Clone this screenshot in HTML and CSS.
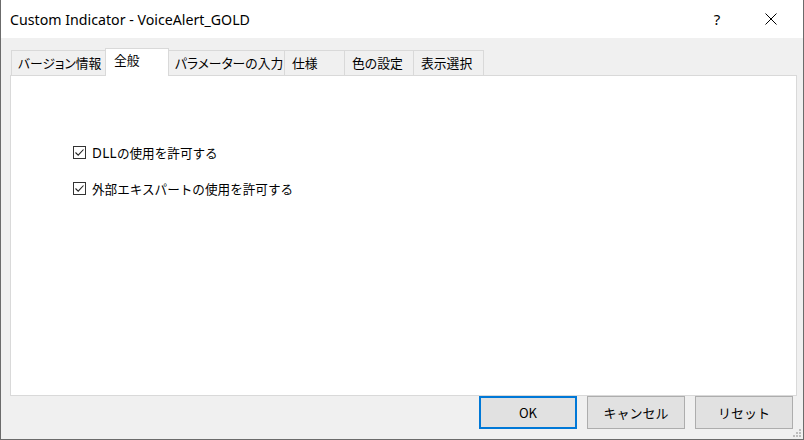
FILE: index.html
```html
<!DOCTYPE html>
<html lang="ja">
  <head>
    <title>Custom Indicator - VoiceAlert_GOLD</title>
    <meta charset="utf-8" />
    <link rel="stylesheet" href="styles.css">
  </head>
  <body>
    <div class="window">
      <div class="titleBar">
        <span class="title">Custom Indicator - VoiceAlert_GOLD</span>
        <span class="help">?</span>
        <span class="close">
          <svg width="12" height="12" viewBox="0 0 12 12">
            <path d="M0.5 0.5 L11.5 11.5 M11.5 0.5 L0.5 11.5" stroke="#000" stroke-width="1" fill="none" />
          </svg>
        </span>
      </div>
      <div class="content">
        <div class="tabs">
          <div class="tab tabInfo">バージョン情報</div>
          <div class="tab active tabGeneral">全般</div>
          <div class="tab tabParams">パラメーターの入力</div>
          <div class="tab tabSpec">仕様</div>
          <div class="tab tabColor">色の設定</div>
          <div class="tab tabView">表示選択</div>
        </div>
        <div class="panel">
          <label class="check">
            <span class="box">
              <svg width="11" height="11" viewBox="0 0 11 11">
                <path d="M1.5 5.5 L4.2 8.2 L9.5 2.5" stroke="#222" stroke-width="1.1" fill="none" />
              </svg>
            </span>
            <span><span class="latin">DLL</span>の使用を許可する</span>
          </label>
          <label class="check">
            <span class="box">
              <svg width="11" height="11" viewBox="0 0 11 11">
                <path d="M1.5 5.5 L4.2 8.2 L9.5 2.5" stroke="#222" stroke-width="1.1" fill="none" />
              </svg>
            </span>
            <span>外部エキスパートの使用を許可する</span>
          </label>
        </div>
        <div class="buttons">
          <button class="btn default">OK</button>
          <button class="btn">キャンセル</button>
          <button class="btn">リセット</button>
        </div>
      </div>
      <svg class="grip" width="8" height="8" viewBox="0 0 8 8">
        <rect x="6" y="0" width="2" height="2" fill="#bdbdbd" />
        <rect x="3" y="3" width="2" height="2" fill="#bdbdbd" />
        <rect x="6" y="3" width="2" height="2" fill="#bdbdbd" />
        <rect x="0" y="6" width="2" height="2" fill="#bdbdbd" />
        <rect x="3" y="6" width="2" height="2" fill="#bdbdbd" />
        <rect x="6" y="6" width="2" height="2" fill="#bdbdbd" />
      </svg>
    </div>
  </body>
</html>
```

FILE: styles.css
```css
* {
  margin: 0;
  padding: 0;
  box-sizing: border-box;
}

body {
  font-family: "Noto Sans", "Noto Sans CJK JP", sans-serif;
  background-color: #f0f0f0;
}

.window {
  position: relative;
  width: 804px;
  height: 440px;
  border: 1px solid #6b6b6b;
  border-top: none;
  background-color: #f0f0f0;
  display: flex;
  flex-direction: column;
}

.titleBar {
  height: 38px;
  background-color: #fff;
  display: flex;
  align-items: center;
  padding-left: 9px;
}

.title {
  flex: 1;
  font-size: 14.2px;
  color: #000;
}

.help {
  font-size: 15px;
  width: 46px;
  text-align: center;
  margin-right: 8px;
}

.close {
  width: 46px;
  height: 38px;
  display: flex;
  align-items: center;
  justify-content: center;
  margin-right: 9px;
}

.content {
  flex: 1;
  display: flex;
  flex-direction: column;
  padding: 10px 6px 10px 9px;
}

.tabs {
  height: 27px;
  display: flex;
  align-items: flex-end;
  padding-left: 1px;
  position: relative;
  z-index: 1;
}

.tab {
  height: 25px;
  border: 1px solid #d9d9d9;
  border-bottom: none;
  margin-right: -1px;
  background-color: #f0f0f0;
  font-family: "Noto Sans CJK JP", sans-serif;
  font-feature-settings: "palt";
  font-size: 12.8px;
  line-height: 23px;
  padding-left: 7px;
  white-space: nowrap;
  overflow: hidden;
  color: #000;
}

.tab.active {
  height: 28px;
  background-color: #fff;
  line-height: 21px;
  padding-left: 8px;
  margin-bottom: -1px;
  position: relative;
  z-index: 2;
}

.tabInfo {
  width: 95px;
  padding-left: 6px;
}

.tabGeneral {
  width: 64px;
}

.tabParams {
  width: 117px;
  padding-left: 6px;
}

.tabSpec {
  width: 61px;
}

.tabColor {
  width: 70px;
}

.tabView {
  width: 71px;
}

.panel {
  flex: 1;
  background-color: #fff;
  border: 1px solid #d9d9d9;
  padding: 70px 0 0 62px;
  display: flex;
  flex-direction: column;
  gap: 23px;
}

.check {
  display: flex;
  align-items: center;
  height: 13px;
  font-family: "Noto Sans CJK JP", sans-serif;
  font-size: 12.6px;
  color: #000;
}

.latin {
  font-family: "Noto Sans", sans-serif;
  font-size: 13.5px;
  letter-spacing: 0.3px;
}

.box {
  width: 13px;
  height: 13px;
  border: 1px solid #333;
  display: flex;
  align-items: center;
  justify-content: center;
  margin-right: 6px;
}

.buttons {
  height: 33px;
  display: flex;
  justify-content: flex-end;
  gap: 10px;
  padding-right: 4px;
}

.btn {
  width: 98px;
  height: 33px;
  background-color: #e1e1e1;
  border: 1px solid #adadad;
  font-family: "Noto Sans CJK JP", sans-serif;
  font-size: 13px;
  color: #000;
}

.btn.default {
  border: 2px solid #0078d7;
}

.grip {
  position: absolute;
  right: 2px;
  bottom: 2px;
}
```
